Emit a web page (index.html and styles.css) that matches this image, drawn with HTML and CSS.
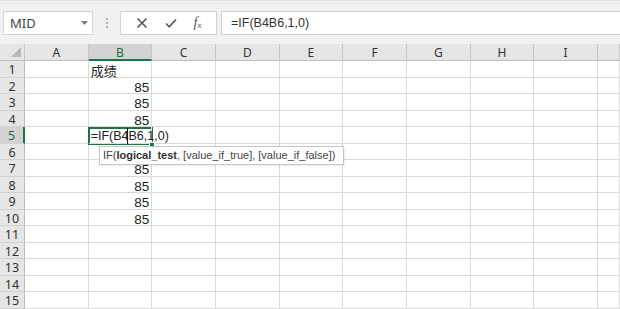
FILE: index.html
```html
<!DOCTYPE html>
<html lang="zh-CN">
<head>
    <meta charset="UTF-8">
    <title>Excel - IF</title>
    <link rel="stylesheet" href="styles.css">
</head>
<body>
    <div class="formula-bar">
        <div class="name-box">
            <span>MID</span>
            <svg class="caret" viewBox="0 0 7 4"><path d="M0 0h7L3.5 4z"/></svg>
        </div>
        <div class="grip"><i></i><i></i><i></i></div>
        <div class="fx-buttons">
            <svg class="icon" viewBox="0 0 12 12"><path d="M1.5 1.5l9 9M10.5 1.5l-9 9"/></svg>
            <svg class="icon" viewBox="0 0 12 12"><path d="M1 6.5l3.2 3.3L11 2.5"/></svg>
            <span class="fx">f<sub>x</sub></span>
        </div>
        <div class="formula-input">=IF(B4B6,1,0)</div>
    </div>

    <div class="sheet">
        <div class="corner"></div>
        <div class="ch">A</div><div class="ch sel">B</div><div class="ch">C</div><div class="ch">D</div><div class="ch">E</div><div class="ch">F</div><div class="ch">G</div><div class="ch">H</div><div class="ch">I</div><div class="ch"></div>

        <div class="rh">1</div><div class="c"></div><div class="c cjk">成绩</div><div class="c"></div><div class="c"></div><div class="c"></div><div class="c"></div><div class="c"></div><div class="c"></div><div class="c"></div><div class="c"></div>
        <div class="rh">2</div><div class="c"></div><div class="c num">85</div><div class="c"></div><div class="c"></div><div class="c"></div><div class="c"></div><div class="c"></div><div class="c"></div><div class="c"></div><div class="c"></div>
        <div class="rh">3</div><div class="c"></div><div class="c num">85</div><div class="c"></div><div class="c"></div><div class="c"></div><div class="c"></div><div class="c"></div><div class="c"></div><div class="c"></div><div class="c"></div>
        <div class="rh">4</div><div class="c"></div><div class="c num">85</div><div class="c"></div><div class="c"></div><div class="c"></div><div class="c"></div><div class="c"></div><div class="c"></div><div class="c"></div><div class="c"></div>
        <div class="rh sel">5</div><div class="c"></div><div class="c edit">=IF(B4B6,1,0)</div><div class="c"></div><div class="c"></div><div class="c"></div><div class="c"></div><div class="c"></div><div class="c"></div><div class="c"></div><div class="c"></div>
        <!-- row 6 value sits under the tooltip -->
        <div class="rh">6</div><div class="c"></div><div class="c"></div><div class="c"></div><div class="c"></div><div class="c"></div><div class="c"></div><div class="c"></div><div class="c"></div><div class="c"></div><div class="c"></div>
        <div class="rh">7</div><div class="c"></div><div class="c num">85</div><div class="c"></div><div class="c"></div><div class="c"></div><div class="c"></div><div class="c"></div><div class="c"></div><div class="c"></div><div class="c"></div>
        <div class="rh">8</div><div class="c"></div><div class="c num">85</div><div class="c"></div><div class="c"></div><div class="c"></div><div class="c"></div><div class="c"></div><div class="c"></div><div class="c"></div><div class="c"></div>
        <div class="rh">9</div><div class="c"></div><div class="c num">85</div><div class="c"></div><div class="c"></div><div class="c"></div><div class="c"></div><div class="c"></div><div class="c"></div><div class="c"></div><div class="c"></div>
        <div class="rh">10</div><div class="c"></div><div class="c num">85</div><div class="c"></div><div class="c"></div><div class="c"></div><div class="c"></div><div class="c"></div><div class="c"></div><div class="c"></div><div class="c"></div>
        <div class="rh">11</div><div class="c"></div><div class="c"></div><div class="c"></div><div class="c"></div><div class="c"></div><div class="c"></div><div class="c"></div><div class="c"></div><div class="c"></div><div class="c"></div>
        <div class="rh">12</div><div class="c"></div><div class="c"></div><div class="c"></div><div class="c"></div><div class="c"></div><div class="c"></div><div class="c"></div><div class="c"></div><div class="c"></div><div class="c"></div>
        <div class="rh">13</div><div class="c"></div><div class="c"></div><div class="c"></div><div class="c"></div><div class="c"></div><div class="c"></div><div class="c"></div><div class="c"></div><div class="c"></div><div class="c"></div>
        <div class="rh">14</div><div class="c"></div><div class="c"></div><div class="c"></div><div class="c"></div><div class="c"></div><div class="c"></div><div class="c"></div><div class="c"></div><div class="c"></div><div class="c"></div>
        <div class="rh">15</div><div class="c"></div><div class="c"></div><div class="c"></div><div class="c"></div><div class="c"></div><div class="c"></div><div class="c"></div><div class="c"></div><div class="c"></div><div class="c"></div>

        <!-- active cell B5 while editing -->
        <div class="active-cell"></div>
        <div class="text-cursor"></div>
        <div class="fill-handle"></div>
        <div class="tooltip">IF(<b>logical_test</b>, [value_if_true], [value_if_false])</div>
    </div>
</body>
</html>
```

FILE: styles.css
```css
* {
    margin: 0;
    padding: 0;
    box-sizing: border-box;
}

body {
    width: 620px;
    height: 309px;
    overflow: hidden;
    background: #fff;
    font-family: "Liberation Sans", Arial, sans-serif;
    color: #222;
}

/* formula bar */
.formula-bar {
    height: 44px;
    background: #f1f1f1;
    border-top: 1px solid #e0e0e0;
    display: flex;
    align-items: flex-start;
    padding-top: 10px;
}

.name-box {
    margin-left: 3px;
    width: 90px;
    height: 24px;
    background: #fff;
    border: 1px solid #d4d4d4;
    display: flex;
    align-items: center;
    justify-content: space-between;
    padding: 0 4px 0 6px;
    font-family: "Noto Sans", sans-serif;
    font-size: 13px;
    color: #444;
}

.caret {
    width: 7px;
    height: 4px;
    fill: #777;
}

.grip {
    width: 27px;
    height: 24px;
    display: flex;
    flex-direction: column;
    align-items: center;
    justify-content: center;
    gap: 2px;
}

.grip i {
    width: 2px;
    height: 2px;
    background: #b0b0b0;
}

.fx-buttons {
    width: 97px;
    height: 24px;
    background: #fff;
    border: 1px solid #d4d4d4;
    display: flex;
    align-items: center;
    justify-content: space-around;
    padding: 0 6px;
}

.icon {
    width: 12px;
    height: 12px;
    fill: none;
    stroke: #555;
    stroke-width: 1.6;
}

.fx {
    font-family: "Liberation Serif", serif;
    font-style: italic;
    font-size: 14px;
    color: #555;
}

.fx sub {
    font-size: 9px;
    vertical-align: -1px;
}

.formula-input {
    flex: 1;
    margin-left: 4px;
    height: 24px;
    background: #fff;
    border: 1px solid #d4d4d4;
    border-right: none;
    padding-left: 9px;
    font-size: 12.5px;
    line-height: 22px;
    color: #333;
}

/* sheet grid */
.sheet {
    position: relative;
    display: grid;
    grid-template-columns: 25px repeat(9, 63.67px) 1fr;
    grid-template-rows: 17px repeat(15, 16.53px);
}

.corner {
    background: #e6e6e6;
    border-right: 1px solid #c8c8c8;
    border-bottom: 1px solid #bdbdbd;
    position: relative;
}

.corner::after {
    content: "";
    position: absolute;
    right: 3px;
    bottom: 3px;
    border-left: 10px solid transparent;
    border-bottom: 10px solid #b8b8b8;
}

.ch {
    background: #e6e6e6;
    border-right: 1px solid #c6c6c6;
    border-bottom: 1px solid #bdbdbd;
    font-family: "Noto Sans", sans-serif;
    font-size: 12px;
    line-height: 17px;
    text-align: center;
    color: #333;
}

.ch.sel {
    background: #d2d2d2;
    color: #1e6b3f;
    border-bottom: 2px solid #217346;
}

.rh {
    background: #e6e6e6;
    border-right: 1px solid #bdbdbd;
    border-bottom: 1px solid #d2d2d2;
    font-family: "Noto Sans", sans-serif;
    font-size: 12.5px;
    line-height: 17px;
    text-align: center;
    color: #333;
}

.rh.sel {
    background: #d2d2d2;
    color: #1e6b3f;
    border-right: 2px solid #217346;
}

.c {
    border-right: 1px solid #dadada;
    border-bottom: 1px solid #dadada;
    font-size: 13.5px;
    line-height: 15px;
    padding: 2px 2px 0;
    white-space: nowrap;
    color: #222;
}

.num {
    text-align: right;
}

.cjk {
    font-family: "Noto Sans CJK SC", sans-serif;
    font-size: 13px;
}

.edit {
    font-size: 12.5px;
    overflow: visible;
    position: relative;
    z-index: 1;
}

.active-cell {
    position: absolute;
    left: 88px;
    top: 83px;
    width: 65px;
    height: 18px;
    border: 2px solid #217346;
}

.text-cursor {
    position: absolute;
    left: 127px;
    top: 84px;
    width: 1px;
    height: 16px;
    background: #111;
    z-index: 2;
}

.fill-handle {
    position: absolute;
    left: 149px;
    top: 98px;
    width: 6px;
    height: 6px;
    background: #217346;
    border: 1px solid #fff;
    z-index: 2;
}

.tooltip {
    position: absolute;
    left: 99px;
    top: 102px;
    width: 245px;
    height: 19px;
    background: #fff;
    border: 1px solid #c6c6c6;
    box-shadow: 1px 1px 2px rgba(0,0,0,0.08);
    font-size: 11px;
    line-height: 17px;
    padding-left: 3px;
    color: #444;
    white-space: nowrap;
    z-index: 3;
}

.tooltip b {
    color: #333;
}
```
